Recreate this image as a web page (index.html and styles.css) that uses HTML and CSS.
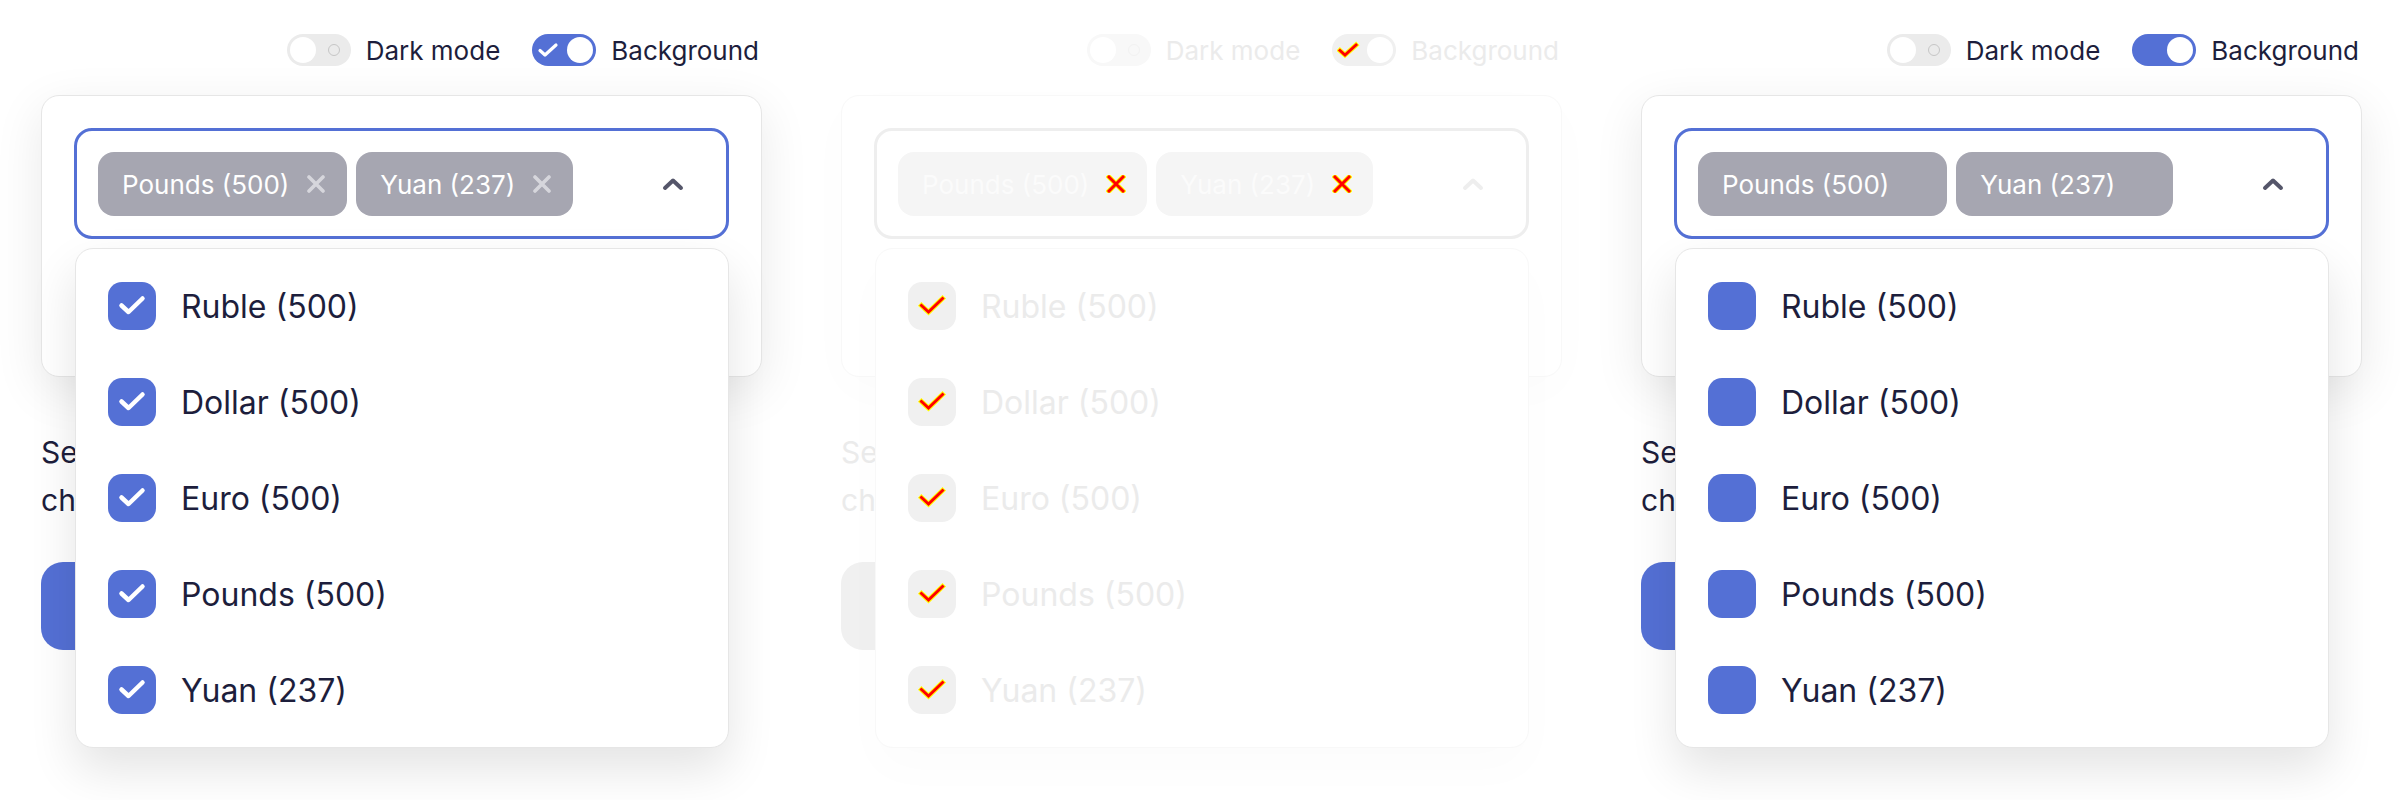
FILE: index.html
```html
<!DOCTYPE html>
<html>
<head>
  <title>Currency select</title>
  <link rel="stylesheet" href="styles.css">
</head>
<body>
  <main class="board">

    <!-- full render -->
    <section class="panel">
      <div class="switches">
        <label class="switch">
          <span class="track"><span class="knob"></span><span class="ring"></span></span>
          Dark mode
        </label>
        <label class="switch">
          <span class="track on">
            <svg class="icon tick-sm" width="24" height="18" viewBox="0 0 24 18"><path class="edge" d="M3 9.5 L8 14 L19 4"/><path class="line" d="M3 9.5 L8 14 L19 4"/></svg>
            <span class="knob"></span>
          </span>
          Background
        </label>
      </div>
      <div class="stage">
        <div class="card">
          <div class="select">
            <div class="chips">
              <span class="chip">Pounds (500)
                <svg class="icon cross" width="20" height="18" viewBox="0 0 20 18"><path class="edge" d="M3 2 L17 16 M17 2 L3 16"/><path class="line" d="M3 2 L17 16 M17 2 L3 16"/></svg>
              </span>
              <span class="chip">Yuan (237)
                <svg class="icon cross" width="20" height="18" viewBox="0 0 20 18"><path class="edge" d="M3 2 L17 16 M17 2 L3 16"/><path class="line" d="M3 2 L17 16 M17 2 L3 16"/></svg>
              </span>
            </div>
            <svg class="chevron" width="22" height="14" viewBox="0 0 22 14"><path d="M3 11 L11 3.5 L19 11"/></svg>
          </div>
        </div>
        <p class="hint">Select<br>charts</p>
        <button class="btn">Apply</button>
        <ul class="menu">
          <li><span class="box"><svg class="icon tick" width="48" height="48" viewBox="0 0 48 48"><path class="edge" d="M13.5 23.5 L20.5 30 L34.5 16.5"/><path class="line" d="M13.5 23.5 L20.5 30 L34.5 16.5"/></svg></span>Ruble (500)</li>
          <li><span class="box"><svg class="icon tick" width="48" height="48" viewBox="0 0 48 48"><path class="edge" d="M13.5 23.5 L20.5 30 L34.5 16.5"/><path class="line" d="M13.5 23.5 L20.5 30 L34.5 16.5"/></svg></span>Dollar (500)</li>
          <li><span class="box"><svg class="icon tick" width="48" height="48" viewBox="0 0 48 48"><path class="edge" d="M13.5 23.5 L20.5 30 L34.5 16.5"/><path class="line" d="M13.5 23.5 L20.5 30 L34.5 16.5"/></svg></span>Euro (500)</li>
          <li><span class="box"><svg class="icon tick" width="48" height="48" viewBox="0 0 48 48"><path class="edge" d="M13.5 23.5 L20.5 30 L34.5 16.5"/><path class="line" d="M13.5 23.5 L20.5 30 L34.5 16.5"/></svg></span>Pounds (500)</li>
          <li><span class="box"><svg class="icon tick" width="48" height="48" viewBox="0 0 48 48"><path class="edge" d="M13.5 23.5 L20.5 30 L34.5 16.5"/><path class="line" d="M13.5 23.5 L20.5 30 L34.5 16.5"/></svg></span>Yuan (237)</li>
        </ul>
      </div>
    </section>

    <!-- icons only -->
    <section class="panel ghost">
      <div class="switches">
        <label class="switch">
          <span class="track"><span class="knob"></span><span class="ring"></span></span>
          Dark mode
        </label>
        <label class="switch">
          <span class="track on">
            <svg class="icon tick-sm" width="24" height="18" viewBox="0 0 24 18"><path class="edge" d="M3 9.5 L8 14 L19 4"/><path class="line" d="M3 9.5 L8 14 L19 4"/></svg>
            <span class="knob"></span>
          </span>
          Background
        </label>
      </div>
      <div class="stage">
        <div class="card">
          <div class="select">
            <div class="chips">
              <span class="chip">Pounds (500)
                <svg class="icon cross" width="20" height="18" viewBox="0 0 20 18"><path class="edge" d="M3 2 L17 16 M17 2 L3 16"/><path class="line" d="M3 2 L17 16 M17 2 L3 16"/></svg>
              </span>
              <span class="chip">Yuan (237)
                <svg class="icon cross" width="20" height="18" viewBox="0 0 20 18"><path class="edge" d="M3 2 L17 16 M17 2 L3 16"/><path class="line" d="M3 2 L17 16 M17 2 L3 16"/></svg>
              </span>
            </div>
            <svg class="chevron" width="22" height="14" viewBox="0 0 22 14"><path d="M3 11 L11 3.5 L19 11"/></svg>
          </div>
        </div>
        <p class="hint">Select<br>charts</p>
        <button class="btn">Apply</button>
        <ul class="menu">
          <li><span class="box"><svg class="icon tick" width="48" height="48" viewBox="0 0 48 48"><path class="edge" d="M13.5 23.5 L20.5 30 L34.5 16.5"/><path class="line" d="M13.5 23.5 L20.5 30 L34.5 16.5"/></svg></span>Ruble (500)</li>
          <li><span class="box"><svg class="icon tick" width="48" height="48" viewBox="0 0 48 48"><path class="edge" d="M13.5 23.5 L20.5 30 L34.5 16.5"/><path class="line" d="M13.5 23.5 L20.5 30 L34.5 16.5"/></svg></span>Dollar (500)</li>
          <li><span class="box"><svg class="icon tick" width="48" height="48" viewBox="0 0 48 48"><path class="edge" d="M13.5 23.5 L20.5 30 L34.5 16.5"/><path class="line" d="M13.5 23.5 L20.5 30 L34.5 16.5"/></svg></span>Euro (500)</li>
          <li><span class="box"><svg class="icon tick" width="48" height="48" viewBox="0 0 48 48"><path class="edge" d="M13.5 23.5 L20.5 30 L34.5 16.5"/><path class="line" d="M13.5 23.5 L20.5 30 L34.5 16.5"/></svg></span>Pounds (500)</li>
          <li><span class="box"><svg class="icon tick" width="48" height="48" viewBox="0 0 48 48"><path class="edge" d="M13.5 23.5 L20.5 30 L34.5 16.5"/><path class="line" d="M13.5 23.5 L20.5 30 L34.5 16.5"/></svg></span>Yuan (237)</li>
        </ul>
      </div>
    </section>

    <!-- without icons -->
    <section class="panel bare">
      <div class="switches">
        <label class="switch">
          <span class="track"><span class="knob"></span><span class="ring"></span></span>
          Dark mode
        </label>
        <label class="switch">
          <span class="track on">
            <svg class="icon tick-sm" width="24" height="18" viewBox="0 0 24 18"><path class="edge" d="M3 9.5 L8 14 L19 4"/><path class="line" d="M3 9.5 L8 14 L19 4"/></svg>
            <span class="knob"></span>
          </span>
          Background
        </label>
      </div>
      <div class="stage">
        <div class="card">
          <div class="select">
            <div class="chips">
              <span class="chip">Pounds (500)
                <svg class="icon cross" width="20" height="18" viewBox="0 0 20 18"><path class="edge" d="M3 2 L17 16 M17 2 L3 16"/><path class="line" d="M3 2 L17 16 M17 2 L3 16"/></svg>
              </span>
              <span class="chip">Yuan (237)
                <svg class="icon cross" width="20" height="18" viewBox="0 0 20 18"><path class="edge" d="M3 2 L17 16 M17 2 L3 16"/><path class="line" d="M3 2 L17 16 M17 2 L3 16"/></svg>
              </span>
            </div>
            <svg class="chevron" width="22" height="14" viewBox="0 0 22 14"><path d="M3 11 L11 3.5 L19 11"/></svg>
          </div>
        </div>
        <p class="hint">Select<br>charts</p>
        <button class="btn">Apply</button>
        <ul class="menu">
          <li><span class="box"><svg class="icon tick" width="48" height="48" viewBox="0 0 48 48"><path class="edge" d="M13.5 23.5 L20.5 30 L34.5 16.5"/><path class="line" d="M13.5 23.5 L20.5 30 L34.5 16.5"/></svg></span>Ruble (500)</li>
          <li><span class="box"><svg class="icon tick" width="48" height="48" viewBox="0 0 48 48"><path class="edge" d="M13.5 23.5 L20.5 30 L34.5 16.5"/><path class="line" d="M13.5 23.5 L20.5 30 L34.5 16.5"/></svg></span>Dollar (500)</li>
          <li><span class="box"><svg class="icon tick" width="48" height="48" viewBox="0 0 48 48"><path class="edge" d="M13.5 23.5 L20.5 30 L34.5 16.5"/><path class="line" d="M13.5 23.5 L20.5 30 L34.5 16.5"/></svg></span>Euro (500)</li>
          <li><span class="box"><svg class="icon tick" width="48" height="48" viewBox="0 0 48 48"><path class="edge" d="M13.5 23.5 L20.5 30 L34.5 16.5"/><path class="line" d="M13.5 23.5 L20.5 30 L34.5 16.5"/></svg></span>Pounds (500)</li>
          <li><span class="box"><svg class="icon tick" width="48" height="48" viewBox="0 0 48 48"><path class="edge" d="M13.5 23.5 L20.5 30 L34.5 16.5"/><path class="line" d="M13.5 23.5 L20.5 30 L34.5 16.5"/></svg></span>Yuan (237)</li>
        </ul>
      </div>
    </section>

  </main>
</body>
</html>
```

FILE: styles.css
```css
body {
  margin: 0;
  font-family: Inter, "Noto Sans", sans-serif;
  background: #fff;
}

.board {
  display: grid;
  grid-template-columns: repeat(3, 800px);
}

.panel {
  --accent: #5470d5;
  --ink: #1d1e3c;
  --chip: #a6a6b1;
  --chip-ink: #fff;
  --cross: #d6d6dc;
  --card-line: #e6e6e6;
  --field-line: #5470d5;
  --track: #ebebeb;
  --ring: #c6c6c6;
  --chevron: #55566a;
  --tick: #fff;
  --edge: none;
  --shade: rgba(0, 0, 0, 0.09);
  --menu-shade: rgba(0, 0, 0, 0.11);
  box-sizing: border-box;
  height: 800px;
  padding: 34px 38px 0 41px;
}

.ghost {
  --accent: #f0f0f0;
  --ink: #ebebeb;
  --chip: #f5f5f5;
  --chip-ink: #fbfbfb;
  --cross: #f00;
  --card-line: #f8f8f8;
  --field-line: #eeeeee;
  --track: #f8f8f8;
  --ring: #f2f2f2;
  --chevron: #eeeeee;
  --tick: #f00;
  --edge: #ff0;
  --shade: rgba(0, 0, 0, 0.015);
  --menu-shade: rgba(0, 0, 0, 0.015);
}

.bare .icon {
  visibility: hidden;
}

/* switches */
.switches {
  display: flex;
  justify-content: flex-end;
  align-items: center;
  gap: 32px;
  height: 32px;
  padding-right: 3px;
}

.switch {
  display: flex;
  align-items: center;
  gap: 15px;
  font-size: 26px;
  color: var(--ink);
}

.track {
  box-sizing: border-box;
  display: flex;
  align-items: center;
  justify-content: space-between;
  width: 64px;
  height: 32px;
  padding: 0 3px;
  border-radius: 16px;
  background: var(--track);
}

.track.on {
  background: var(--accent);
}

.knob {
  width: 26px;
  height: 26px;
  border-radius: 50%;
  background: #fff;
}

.ring {
  width: 10px;
  height: 10px;
  margin-right: 8px;
  border: 1.5px solid var(--ring);
  border-radius: 50%;
}

/* icons: edge is the outline pass, line the stroke on top */
.icon path {
  fill: none;
  stroke-linecap: round;
  stroke-linejoin: round;
}

.icon .edge {
  stroke: var(--edge);
}

.icon .line {
  stroke: var(--tick);
}

.tick-sm {
  margin-left: 2px;
}

.tick-sm path {
  stroke-width: 3.2;
}

.tick path {
  stroke-width: 4.5;
}

.cross .line {
  stroke: var(--cross);
}

.cross path {
  stroke-width: 3.6;
}

.ghost .icon path {
  stroke-linecap: square;
  stroke-linejoin: miter;
}

.ghost .icon .edge {
  stroke-width: 5;
}

.ghost .icon .line {
  stroke-width: 3;
}

/* card with field */
.stage {
  position: relative;
  margin-top: 29px;
}

.card {
  padding: 32px 32px 137px;
  border: 1px solid var(--card-line);
  border-radius: 18px;
  background: #fff;
  box-shadow: 0 14px 50px var(--shade);
}

.select {
  display: flex;
  align-items: center;
  justify-content: space-between;
  padding: 21px 42px 20px 21px;
  border: 3px solid var(--field-line);
  border-radius: 18px;
}

.chips {
  display: flex;
  gap: 9px;
}

.chip {
  display: flex;
  align-items: center;
  gap: 17px;
  height: 64px;
  padding: 0 21px 0 24px;
  border-radius: 16px;
  background: var(--chip);
  color: var(--chip-ink);
  font-size: 26px;
}

.chevron path {
  fill: none;
  stroke: var(--chevron);
  stroke-width: 4;
  stroke-linecap: round;
  stroke-linejoin: round;
}

.hint {
  margin: 51px 0 0;
  font-size: 30px;
  line-height: 48px;
  color: var(--ink);
}

.btn {
  display: block;
  width: 200px;
  height: 88px;
  margin-top: 38px;
  border: none;
  border-radius: 22px;
  background: var(--accent);
  color: #fff;
  font: inherit;
  font-size: 28px;
}

/* open dropdown */
.menu {
  position: absolute;
  top: 153px;
  left: 34px;
  box-sizing: border-box;
  width: 654px;
  margin: 0;
  padding: 9px 32px;
  list-style: none;
  border: 1px solid var(--card-line);
  border-radius: 18px;
  background: #fff;
  box-shadow: 0 22px 48px var(--menu-shade);
}

.menu li {
  display: flex;
  align-items: center;
  gap: 25px;
  height: 96px;
  font-size: 32px;
  color: var(--ink);
}

.box {
  width: 48px;
  height: 48px;
  border-radius: 14px;
  background: var(--accent);
}

.box svg {
  display: block;
}
```
